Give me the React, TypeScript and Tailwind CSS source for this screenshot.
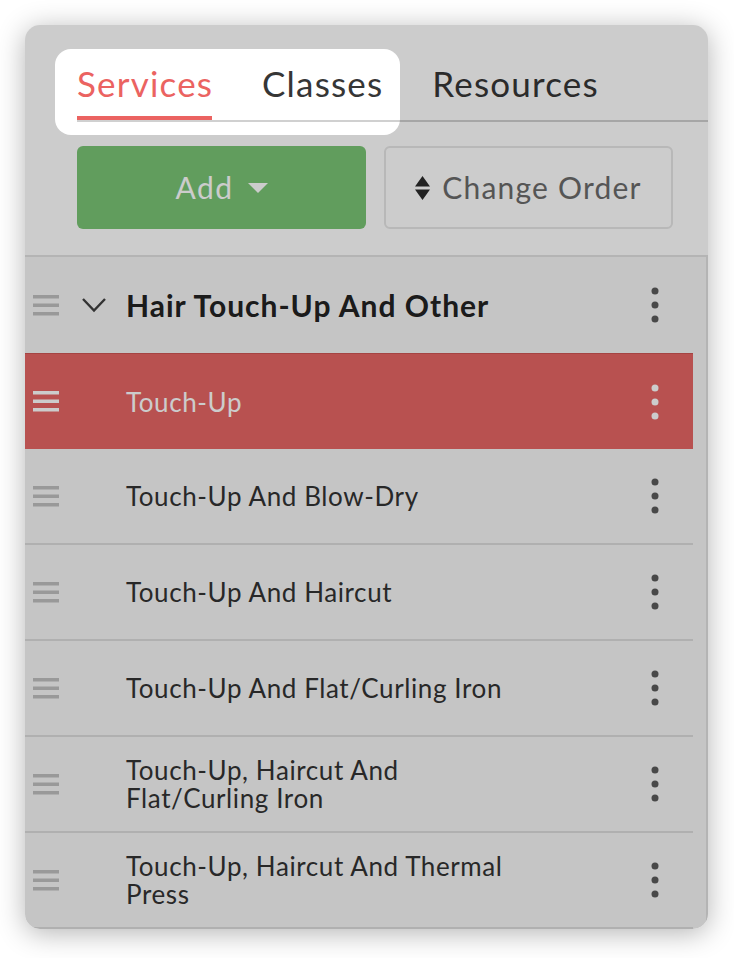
import { useState } from 'react';
import clsx from 'clsx';

type Row = {
    title: string;
    group?: boolean;
    active?: boolean;
};

const rows: Row[] = [
    { title: 'Hair Touch-Up And Other', group: true },
    { title: 'Touch-Up', active: true },
    { title: 'Touch-Up And Blow-Dry' },
    { title: 'Touch-Up And Haircut' },
    { title: 'Touch-Up And Flat/Curling Iron' },
    { title: 'Touch-Up, Haircut And Flat/Curling Iron' },
    { title: 'Touch-Up, Haircut And Thermal Press' },
];

function DragHandle({ light }: { light?: boolean }) {
    return (
        <svg width="26" height="21" viewBox="0 0 26 21" className={light ? 'fill-white' : 'fill-[#c0c0c0]'}>
            <rect y="0" width="26" height="3.5" />
            <rect y="8.5" width="26" height="3.5" />
            <rect y="17" width="26" height="3.5" />
        </svg>
    );
}

function Kebab({ light }: { light?: boolean }) {
    return (
        <svg width="8" height="36" viewBox="0 0 8 36" className={light ? 'fill-white' : 'fill-[#5a5a5a]'}>
            <circle cx="4" cy="4" r="3.5" />
            <circle cx="4" cy="18" r="3.5" />
            <circle cx="4" cy="32" r="3.5" />
        </svg>
    );
}

function ListRow({ row }: { row: Row }) {
    return (
        <div className={clsx(
            'h-[96px] flex items-center pl-[8px] pr-[34px]',
            row.active && 'bg-[#e76664] border-t border-[#cf5654]',
            !row.active && !row.group && 'border-b-2 border-[#dcdcdc]'
        )}>
            <DragHandle light={row.active} />
            <div className="ml-[22px] w-[26px] flex items-center">
                {row.group && (
                    <svg width="26" height="16" viewBox="0 0 26 16" fill="none" className="stroke-[#404040]">
                        <polyline points="2,2 13,13.5 24,2" strokeWidth="2.4" />
                    </svg>
                )}
            </div>
            <div className="ml-[19px] flex-1">
                <div className={clsx(
                    'max-w-[400px]',
                    row.group
                        ? 'text-[30px] font-bold leading-[34px] tracking-[1px] text-[#222]'
                        : 'text-[26px] leading-[28px] tracking-[0.6px]',
                    row.active ? 'text-white' : !row.group && 'text-[#333]'
                )}>
                    {row.title}
                </div>
            </div>
            <Kebab light={row.active} />
        </div>
    );
}

export default function App() {
    const [tab, setTab] = useState('Services');

    return (
        <div className="w-[734px] h-[958px] bg-white p-[25px] font-['Lato',_sans-serif]">
            <div className="relative w-[683px] rounded-[15px] bg-white overflow-hidden shadow-[0_4px_28px_rgba(0,0,0,0.3)]">
                {/* tabs */}
                <div className="ml-[52px] mt-[38px] flex border-b-2 border-[#d0d0d0]">
                    {['Services', 'Classes', 'Resources'].map((t) => (
                        <button
                            key={t}
                            onClick={() => setTab(t)}
                            className="mr-[50px] flex flex-col items-stretch"
                        >
                            <span className={clsx(
                                'text-[35px] leading-[40px] tracking-[1.2px] -mr-[1.2px]',
                                tab === t ? 'text-[#eb6361]' : 'text-[#363636]'
                            )}>
                                {t}
                            </span>
                            <span className={clsx(
                                'mt-[13px] h-[4px]',
                                tab === t ? 'bg-[#eb6361]' : 'bg-transparent'
                            )} />
                        </button>
                    ))}
                </div>

                {/* actions */}
                <div className="mt-[24px] ml-[52px] flex gap-[18px]">
                    <button className="w-[289px] h-[83px] rounded-[6px] bg-[#7ac575] flex items-center justify-center gap-[14px] text-white text-[30px] tracking-[1.5px]">
                        Add
                        <svg width="20" height="10" viewBox="0 0 20 10" className="fill-white">
                            <path d="M0 0 H20 L10 10 Z" />
                        </svg>
                    </button>
                    <button className="w-[289px] h-[83px] rounded-[6px] border-2 border-[#e6e6e6] flex items-center justify-center gap-[12px] text-[#6b6b6b] text-[30px] tracking-[1.2px]">
                        <svg width="15" height="24" viewBox="0 0 15 24" className="fill-[#2b2b2b]">
                            <path d="M7.5 0 L15 10.5 H0 Z" />
                            <path d="M0 13.5 H15 L7.5 24 Z" />
                        </svg>
                        Change Order
                    </button>
                </div>

                {/* list */}
                <div className="mt-[26px] flex border-t-2 border-r-2 border-[#e1e1e1] bg-[#f7f7f7]">
                    <div className="w-[668px]">
                        {rows.map((r) => (
                            <ListRow key={r.title} row={r} />
                        ))}
                    </div>
                </div>

                {/* tour spotlight */}
                <div className="pointer-events-none absolute left-[30px] top-[24px] w-[345px] h-[86px] rounded-[16px] shadow-[0_0_0_1200px_rgba(0,0,0,0.2)]" />
            </div>
        </div>
    );
}
